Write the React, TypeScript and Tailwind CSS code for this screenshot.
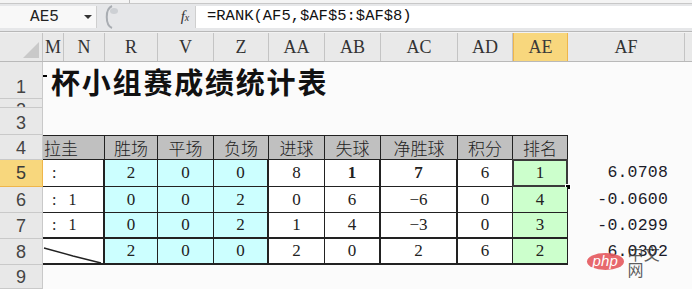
const serif = "font-['Liberation_Serif','Noto_Sans_CJK_SC',serif]"

const headerCols = [
  { id: 'M', w: 'w-[21px]' },
  { id: 'N', w: 'w-[41px]' },
  { id: 'R', w: 'w-[53px]' },
  { id: 'V', w: 'w-[56px]' },
  { id: 'Z', w: 'w-[55px]' },
  { id: 'AA', w: 'w-[56px]' },
  { id: 'AB', w: 'w-[56px]' },
  { id: 'AC', w: 'w-[77px]' },
  { id: 'AD', w: 'w-[55px]' },
  { id: 'AE', w: 'w-[55px]' },
  { id: 'AF', w: 'w-[117px]' },
  { id: '', w: 'w-[30px]' },
]

// table columns (M:N merged)
const tableCols = [
  { w: 'w-[62px]', bg: '' },
  { w: 'w-[53px]', bg: 'bg-[#ccffff]' },
  { w: 'w-[56px]', bg: 'bg-[#ccffff]' },
  { w: 'w-[55px]', bg: 'bg-[#ccffff]' },
  { w: 'w-[56px]', bg: 'bg-white' },
  { w: 'w-[56px]', bg: 'bg-white' },
  { w: 'w-[77px]', bg: 'bg-white' },
  { w: 'w-[55px]', bg: 'bg-white' },
  { w: 'w-[55px]', bg: 'bg-[#ccffcc]' },
]

const heads = ['拉圭', '胜场', '平场', '负场', '进球', '失球', '净胜球', '积分', '排名']

const rows = [
  { n: '5', h: 'h-[27px]', first: ':', vals: ['2', '0', '0', '8', '1', '7', '6', '1'], bold: [4, 5], af: '6.0708', thick: false },
  { n: '6', h: 'h-[26px]', first: ':   1', vals: ['0', '0', '2', '0', '6', '−6', '0', '4'], bold: [], af: '-0.0600', thick: false },
  { n: '7', h: 'h-[26px]', first: ':   1', vals: ['0', '0', '2', '1', '4', '−3', '0', '3'], bold: [], af: '-0.0299', thick: true },
  { n: '8', h: 'h-[26px]', first: '', vals: ['2', '0', '0', '2', '0', '2', '6', '2'], bold: [], af: '6.0302', thick: true },
]

function RowHead({ n, active = false, align = 'items-end' }: { n: string; active?: boolean; align?: string }) {
  return (
    <div
      className={`w-[43px] shrink-0 h-full flex justify-center ${align} overflow-hidden border-r border-b text-[18px] leading-[22px] font-['Liberation_Sans',sans-serif] ${
        active ? 'bg-[#f8d77d] border-[#efb64a] text-[#3a3a3a]' : 'bg-[#e8e8e8] border-[#c9c9c9] text-[#444]'
      }`}
    >
      {n}
    </div>
  )
}

function FormulaBar() {
  return (
    <div className="h-[33px] bg-[#e6e7e9] flex flex-col">
      <div className="h-[4px] bg-[#f4f4f4] border-b border-[#c8c8c8] flex">
        <div className="w-[130px] border-r border-[#bdbdbd]" />
      </div>
      <div className="flex-1 flex items-center pb-[2px]">
        <div className="w-[97px] h-[22px] bg-[#f8f8f8] border-r border-[#cfcfcf] flex items-center">
          <span className="flex-1 text-center pl-[6px] text-[16px] font-['Liberation_Mono',monospace] text-[#222]">AE5</span>
          <svg width="10" height="6" viewBox="0 0 10 6" className="mr-[3px]">
            <path d="M1 1 L9 1 L5 5 Z" fill="#333" />
          </svg>
        </div>
        <div className="w-[78px] h-[22px] flex items-center pl-[6px]">
          <svg width="18" height="24" viewBox="0 0 18 24">
            <path d="M9 1 C2 4 2 20 9 23" stroke="#a9adb2" strokeWidth="2" fill="none" />
            <ellipse cx="11" cy="6" rx="4" ry="3" fill="#cdd0d4" />
          </svg>
        </div>
        <div className="w-[20px] text-center text-[15px] italic font-['Liberation_Serif',serif] text-[#333] leading-none">
          f<span className="text-[10px]">x</span>
        </div>
        <div className="flex-1 h-[22px] bg-white border-l border-[#cfcfcf] flex items-center pl-[11px] text-[15.5px] font-['Liberation_Mono',monospace] text-[#111] whitespace-pre">
          =RANK(AF5,$AF$5:$AF$8)
        </div>
      </div>
      <div className="h-[2px] border-t border-[#b8b8b8] bg-[#f2f2f2]" />
    </div>
  )
}

function ColumnHeaders() {
  return (
    <div className="h-[29px] flex bg-[#e9e9e9] border-b border-[#b9b9b9]">
      <div className="w-[43px] shrink-0 border-r border-[#c4c4c4] flex items-end justify-end p-[3px]">
        <svg width="16" height="16" viewBox="0 0 16 16">
          <path d="M16 0 L16 16 L0 16 Z" fill="#c9c9c9" />
        </svg>
      </div>
      {headerCols.map((c) => (
        <div
          key={c.id || 'x'}
          className={`${c.w} shrink-0 flex items-center justify-center border-r text-[18px] ${serif} ${
            c.id === 'AE' ? 'bg-[#f8d77d] border-[#efb64a] border-l text-[#3a3a3a]' : 'border-[#c4c4c4] text-[#333]'
          }`}
        >
          {c.id}
        </div>
      ))}
    </div>
  )
}

export default function App() {
  return (
    <div className="w-[692px] h-[289px] overflow-hidden bg-[#fbfbfb] relative">
      <FormulaBar />
      <ColumnHeaders />

      {/* row 1: title */}
      <div className="h-[37px] flex">
        <RowHead n="1" />
        <div className="flex items-end pb-[1px]">
          <span className="w-[4px] h-[2px] bg-black mb-[21px] mr-[4px] shrink-0" />
          <span className="text-[29px] leading-[34px] font-bold tracking-[1.8px] font-['Noto_Sans_CJK_SC',sans-serif] text-[#111] whitespace-nowrap">
            杯小组赛成绩统计表
          </span>
        </div>
      </div>

      {/* row 2 */}
      <div className="h-[9px] flex">
        <RowHead n="2" align="items-start" />
      </div>

      {/* row 3 */}
      <div className="h-[27px] flex">
        <RowHead n="3" />
      </div>

      {/* row 4: table header */}
      <div className="h-[25px] flex">
        <RowHead n="4" />
        {tableCols.map((c, i) => (
          <div
            key={i}
            className={`${c.w} shrink-0 h-full bg-[#c0c0c0] border-t border-r border-b border-[#222] flex items-center ${
              i === 0 ? 'justify-start pl-[1px]' : 'justify-center'
            } text-[17px] font-light font-['Noto_Sans_CJK_SC',sans-serif] text-[#222] whitespace-nowrap overflow-hidden`}
          >
            {heads[i]}
          </div>
        ))}
      </div>

      {/* rows 5-8 */}
      {rows.map((r, ri) => (
        <div key={r.n} className={`${r.h} flex`}>
          <RowHead n={r.n} active={ri === 0} align="items-center" />
          <div
            className={`w-[62px] shrink-0 h-full border-r-2 border-[#222] relative flex items-center pl-[9px] text-[16px] ${serif} text-[#222] whitespace-pre ${
              r.thick ? 'border-b-2' : 'border-b'
            } bg-white`}
          >
            {r.first}
            {ri === 3 && (
              <svg className="absolute left-0 top-0" width="60" height="26" viewBox="0 0 60 26">
                <path d="M1 9 L30 17 L58 24" stroke="#222" strokeWidth="1.3" fill="none" />
              </svg>
            )}
          </div>
          {r.vals.map((v, vi) => {
            const c = tableCols[vi + 1]
            const rightThick = vi === 2 || vi === 4 || vi === 5
            return (
              <div
                key={vi}
                className={`${c.w} ${c.bg} shrink-0 h-full border-[#222] relative flex items-center justify-center text-[17px] ${serif} text-[#222] ${
                  r.bold.includes(vi) ? 'font-bold' : ''
                } ${rightThick ? 'border-r-2' : 'border-r'} ${r.thick ? 'border-b-2' : 'border-b'}`}
              >
                {v}
                {ri === 0 && vi === 7 && (
                  <>
                    <div className="absolute -left-[1px] -top-[1px] -right-[1px] -bottom-[1px] border-2 border-[#3a3a3a]" />
                    <div className="absolute -right-[4px] -bottom-[4px] w-[6px] h-[6px] bg-black border border-white" />
                  </>
                )}
              </div>
            )
          })}
          <div className="w-[100px] shrink-0 h-full flex items-center justify-end text-[16.5px] font-['Liberation_Mono',monospace] text-[#1c1c2a] tracking-[0.2px] relative">
            {r.af}
            {ri === 3 && (
              <div className="absolute left-[19px] top-[6px] flex items-center">
                <div className="w-[44px] h-[17px] rounded-[50%] bg-[#e4585d]/90 flex items-center justify-center text-white italic text-[15px] font-['Liberation_Sans',sans-serif] leading-none pb-[2px]">
                  php
                </div>
                <span className="ml-[4px] text-[16px] font-['Noto_Sans_CJK_SC',sans-serif] text-[#333]/80 leading-none">中文网</span>
              </div>
            )}
          </div>
        </div>
      ))}

      {/* row 9 */}
      <div className="h-[24px] flex">
        <RowHead n="9" align="items-center" />
      </div>
    </div>
  )
}
